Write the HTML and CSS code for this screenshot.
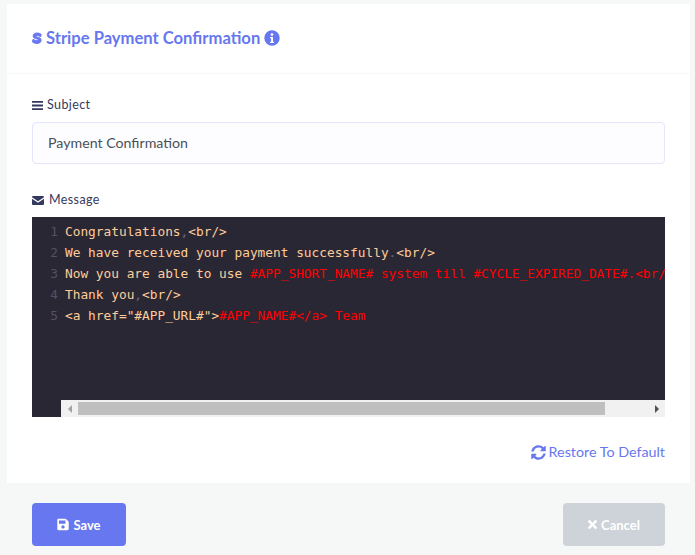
FILE: index.html
```html
<!DOCTYPE html>
<html lang="en">
<head>
<meta charset="utf-8">
<title>Stripe Payment Confirmation</title>
<link rel="stylesheet" href="styles.css">
</head>
<body>
<main class="page">
  <section class="card">
    <header class="card-head">
      <h1 class="title">
        <svg class="title-s" viewBox="0 0 12 14" aria-hidden="true"><path d="M11 2.600C9.600 1.600 8 1 6.300 1 3.400 1 1.400 2.400 1.400 4.600c0 4 6 2.800 6 4.500 0 .7-.7 1-1.700 1-1.500 0-3.200-.7-4.500-1.600L.6 11.900C2.200 13 4 13.600 5.700 13.600c3 0 5.200-1.300 5.200-3.900 0-4.300-6-3-6-4.700 0-.6.500-.9 1.400-.9 1.300 0 2.800.5 4.100 1.300z"/></svg>
        <span>Stripe Payment Confirmation</span>
        <svg class="title-info" viewBox="0 0 16 16" aria-hidden="true"><path fill-rule="evenodd" d="M8 .3a7.700 7.700 0 1 0 0 15.400A7.700 7.700 0 0 0 8 .3zM8 3.200a1.400 1.400 0 1 1 0 2.800 1.400 1.400 0 0 1 0-2.800zM6.100 7h2.900v4.700h1v1.300H6.100v-1.300h1V8.300h-1z"/></svg>
      </h1>
    </header>
    <div class="card-body">
      <label class="label label-subject">
        <svg class="label-icon" viewBox="0 0 11 9" aria-hidden="true"><path d="M0 0h11v1.800H0zM0 3.600h11v1.800H0zM0 7.200h11V9H0z"/></svg>
        Subject
      </label>
      <div class="input">Payment Confirmation</div>
      <label class="label label-message">
        <svg class="label-icon icon-mail" viewBox="0 0 12 9" aria-hidden="true"><path d="M0 1a1 1 0 0 1 1-1h10a1 1 0 0 1 1 1v.3L6 5.300 0 1.300zM0 2.700l6 4 6-4V8a1 1 0 0 1-1 1H1a1 1 0 0 1-1-1z"/></svg>
        Message
      </label>
      <div class="editor">
        <div class="code">
          <div class="gutter"><span>1</span><span>2</span><span>3</span><span>4</span><span>5</span></div>
          <pre class="lines"><span class="t">Congratulations<i>,</i>&lt;br/&gt;</span>
<span class="t">We have received your payment successfully<i>.</i>&lt;br/&gt;</span>
<span class="t">Now you are able to use <b>#APP_SHORT_NAME# system till #CYCLE_EXPIRED_DATE#.&lt;br/&gt;</b></span>
<span class="t">Thank you<i>,</i>&lt;br/&gt;</span>
<span class="t">&lt;a href="#APP_URL#"&gt;<b>#APP_NAME#&lt;/a&gt; Team</b></span></pre>
        </div>
        <div class="scrollbar">
          <span class="arrow arrow-left"></span>
          <div class="track"><div class="thumb"></div></div>
          <span class="arrow arrow-right"></span>
        </div>
      </div>
      <div class="restore-row">
        <a class="restore" href="#">
          <svg class="restore-icon" viewBox="0 0 512 512" aria-hidden="true"><path d="M370.700 133.300C339.500 104 298.900 88 255.800 88c-77.500.1-144.300 53.200-162.800 126.900-1.300 5.400-6.100 9.200-11.700 9.200H24.100c-7.500 0-13.200-6.800-11.800-14.200C33.900 94.900 134.800 8 256 8c66.500 0 126.800 26.100 171.300 68.700L463 41c15.100-15.100 41-4.400 41 17v134c0 13.300-10.700 24-24 24H346c-21.400 0-32.100-25.900-17-41zM32 296h134c21.400 0 32.100 25.900 17 41l-41.800 41.800c31.300 29.300 71.800 45.300 114.900 45.200 77.400-.1 144.300-53.100 162.800-126.800 1.300-5.400 6.100-9.200 11.700-9.200h57.300c7.500 0 13.200 6.800 11.800 14.200C478.100 417.100 377.200 504 256 504c-66.500 0-126.800-26.100-171.300-68.700L49 471c-15.100 15.100-41 4.400-41-17V320c0-13.300 10.700-24 24-24z"/></svg>
          Restore To Default
        </a>
      </div>
    </div>
  </section>
  <footer class="actions">
    <button class="btn btn-save" type="button">
      <svg class="btn-icon" viewBox="0 0 448 512" aria-hidden="true"><path d="M433.900 129.900l-83.900-83.900A48 48 0 0 0 316.100 32H48C21.500 32 0 53.500 0 80v352c0 26.500 21.500 48 48 48h352c26.500 0 48-21.500 48-48V163.900a48 48 0 0 0-14.100-34zM224 416c-35.300 0-64-28.700-64-64 0-35.300 28.700-64 64-64s64 28.700 64 64c0 35.300-28.700 64-64 64zm96-304.500V212c0 6.600-5.400 12-12 12H76c-6.600 0-12-5.400-12-12V108c0-6.600 5.400-12 12-12h228.500c3.200 0 6.200 1.300 8.500 3.500l3.500 3.500c2.200 2.300 3.500 5.300 3.500 8.500z"/></svg>
      Save
    </button>
    <button class="btn btn-cancel" type="button">
      <svg class="btn-icon icon-x" viewBox="0 0 352 512" aria-hidden="true"><path d="M242.700 256l100-100c12.300-12.300 12.300-32.200 0-44.500l-22.200-22.200c-12.300-12.300-32.200-12.300-44.500 0L176 189.300 76 89.200c-12.300-12.300-32.200-12.300-44.500 0L9.300 111.500c-12.300 12.300-12.300 32.200 0 44.500l100 100-100 100c-12.300 12.300-12.300 32.200 0 44.500l22.200 22.200c12.300 12.300 32.200 12.300 44.500 0l100-100 100 100c12.300 12.300 32.200 12.300 44.500 0l22.200-22.200c12.300-12.300 12.300-32.200 0-44.500z"/></svg>
      Cancel
    </button>
  </footer>
</main>
</body>
</html>
```
FILE: styles.css
```css
* { box-sizing: border-box; }
html, body { margin: 0; height: 100%; }
body {
  background: #f6f8f8;
  font-family: Lato, "Noto Sans", sans-serif;
  color: #34395e;
  overflow: hidden;
}
.page { padding: 4px 5px 0 7px; }
.card { background: #fff; }
.card-head {
  height: 70px;
  padding: 0 25px 2px;
  display: flex;
  align-items: center;
  border-bottom: 1px solid #f7f7fb;
}
.title {
  margin: 0;
  display: flex;
  align-items: center;
  gap: 4px;
  color: #6777ef;
  font-size: 16.600px;
  font-weight: 700;
  line-height: 20px;
}
.title-s { width: 10px; height: 14px; fill: #6777ef; stroke: #6777ef; stroke-width: 1.200px; overflow: visible; }
.title-info { width: 16px; height: 16px; fill: #6777ef; }
.card-body { padding: 22px 25px 0; height: 409px; }
.label {
  display: flex;
  align-items: center;
  gap: 4px;
  height: 18px;
  font-size: 12.500px;
  line-height: 18px;
  letter-spacing: 0.4px;
  color: #34395e;
}
.label-subject { margin-bottom: 8px; }
.label-message { margin-top: 27px; margin-bottom: 8px; gap: 5px; }
.label-icon { width: 11px; height: 9px; fill: #34395e; }
.icon-mail { width: 12px; }
.input {
  height: 42px;
  padding: 0 15px 2px;
  display: flex;
  align-items: center;
  background: #fdfdff;
  border: 1px solid #e4e6fc;
  border-radius: 4px;
  color: #495057;
  font-size: 14.200px;
}
.editor {
  height: 200px;
  background: #2a2734;
  overflow: hidden;
  display: flex;
  flex-direction: column;
}
.code { flex: 1; display: flex; min-height: 0; overflow: hidden; padding-top: 4px; }
.gutter {
  width: 26px;
  flex: none;
  display: flex;
  flex-direction: column;
  align-items: flex-end;
  color: #545167;
  font: 12.800px/21px "DejaVu Sans Mono", monospace;
}
.lines {
  margin: 0 0 0 7px;
  color: #ffcc99;
  font: 12.800px/21px "DejaVu Sans Mono", monospace;
  white-space: pre;
}
.lines i { font-style: normal; color: #6c6783; }
.lines b { font-weight: 400; color: #ff0000; }
.scrollbar {
  flex: none;
  height: 17px;
  margin-left: 29px;
  display: flex;
  align-items: center;
  background: #f1f1f1;
}
.arrow { width: 17px; flex: none; display: flex; justify-content: center; }
.arrow::before {
  content: "";
  border-top: 4px solid transparent;
  border-bottom: 4px solid transparent;
}
.arrow-left::before { border-right: 4px solid #a3a3a3; }
.arrow-right::before { border-left: 4px solid #505050; }
.track { flex: 1; height: 13px; }
.thumb { width: 527px; height: 100%; background: #bfbfbf; }
.restore-row {
  display: flex;
  justify-content: flex-end;
  margin-top: 25px;
}
.restore {
  display: flex;
  align-items: center;
  gap: 3px;
  color: #6777ef;
  font-size: 14.300px;
  line-height: 20px;
  text-decoration: none;
}
.restore-icon { width: 15px; height: 15px; fill: #6777ef; }
.actions {
  display: flex;
  justify-content: space-between;
  padding: 20px 25px 0;
}
.btn {
  height: 43px;
  display: flex;
  align-items: center;
  justify-content: center;
  gap: 4px;
  border: 0;
  border-radius: 4px;
  color: #fff;
  font: 700 13px Lato, "Noto Sans", sans-serif;
}
.btn-save { width: 94px; background: #6777ef; }
.btn-cancel { width: 102px; background: #cdd3d8; }
.btn-icon { width: 12px; height: 13px; fill: #fff; }
.icon-x { width: 9px; }
```
